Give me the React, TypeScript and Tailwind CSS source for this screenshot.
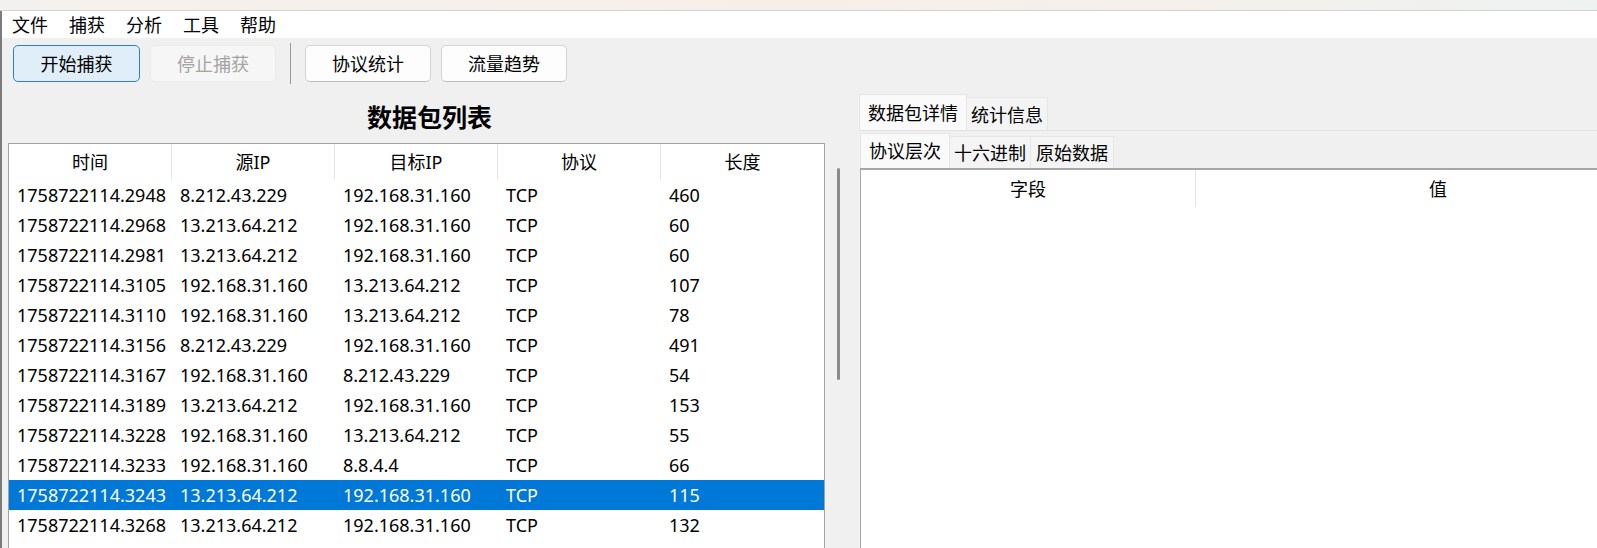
import React from "react";

const rows: string[][] = [
  ["1758722114.2948", "8.212.43.229", "192.168.31.160", "TCP", "460"],
  ["1758722114.2968", "13.213.64.212", "192.168.31.160", "TCP", "60"],
  ["1758722114.2981", "13.213.64.212", "192.168.31.160", "TCP", "60"],
  ["1758722114.3105", "192.168.31.160", "13.213.64.212", "TCP", "107"],
  ["1758722114.3110", "192.168.31.160", "13.213.64.212", "TCP", "78"],
  ["1758722114.3156", "8.212.43.229", "192.168.31.160", "TCP", "491"],
  ["1758722114.3167", "192.168.31.160", "8.212.43.229", "TCP", "54"],
  ["1758722114.3189", "13.213.64.212", "192.168.31.160", "TCP", "153"],
  ["1758722114.3228", "192.168.31.160", "13.213.64.212", "TCP", "55"],
  ["1758722114.3233", "192.168.31.160", "8.8.4.4", "TCP", "66"],
  ["1758722114.3243", "13.213.64.212", "192.168.31.160", "TCP", "115"],
  ["1758722114.3268", "13.213.64.212", "192.168.31.160", "TCP", "132"],
];

const headers = ["时间", "源IP", "目标IP", "协议", "长度"];
const menus = ["文件", "捕获", "分析", "工具", "帮助"];

const App: React.FC = () => {
  const selected = 10;

  return (
    <div
      className="w-[1597px] h-[548px] overflow-hidden bg-[#f0f0f0] flex flex-col text-black text-[18px] leading-none"
      style={{ fontFamily: '"Noto Sans", "Noto Sans CJK SC", sans-serif' }}
    >
      {/* strip of the window behind */}
      <div className="h-[11px] shrink-0 bg-gradient-to-r from-[#f3f1ef] via-[#f8eee8] to-[#eef2f1] border-b border-[#d2d2d2]" />

      <div className="flex-1 min-h-0 flex flex-col border-l-2 border-[#7c7c7c]">
        {/* Menu bar */}
        <div className="h-[27px] shrink-0 bg-white flex items-center -ml-[0.5px]">
          {menus.map((m) => (
            <span key={m} className="px-[10.5px] pt-[1px]">
              {m}
            </span>
          ))}
        </div>

        {/* Toolbar */}
        <div className="h-[50px] shrink-0 flex items-start pt-[7px] pl-[11px]">
          <button className="w-[127px] h-[37px] rounded-[5px] border border-[#2b7fd0] bg-[#e0eef9]">
            开始捕获
          </button>
          <button className="ml-[10px] w-[126px] h-[37px] rounded-[5px] border border-[#ebebeb] bg-[#f6f6f6] text-[#a3a3a3]">
            停止捕获
          </button>
          <div className="ml-[14px] mt-[-2px] w-px h-[41px] bg-[#9a9a9a]" />
          <button className="ml-[14px] w-[126px] h-[37px] rounded-[5px] border border-[#d3d3d3] border-b-[#bdbdbd] bg-[#fdfdfd]">
            协议统计
          </button>
          <button className="ml-[10px] w-[126px] h-[37px] rounded-[5px] border border-[#d3d3d3] border-b-[#bdbdbd] bg-[#fdfdfd]">
            流量趋势
          </button>
        </div>

        {/* Main area */}
        <div className="flex-1 min-h-0 flex">
          {/* Left: packet list */}
          <div className="w-[855px] shrink-0 flex flex-col">
            <div className="h-[55px] shrink-0 flex items-center justify-center pt-[4px] text-[25px] font-bold">
              数据包列表
            </div>
            <div className="flex-1 min-h-0 flex">
              <div className="ml-[6px] w-[817px] bg-white border-t border-l border-r border-[#a2a2a2] overflow-hidden">
                <div className="grid grid-cols-5 h-[36px]">
                  {headers.map((h, i) => (
                    <div
                      key={h}
                      className={
                        "flex items-center justify-center " +
                        (i < 4 ? "border-r border-[#e4e4e4]" : "")
                      }
                    >
                      {h}
                    </div>
                  ))}
                </div>
                {rows.map((r, ri) => (
                  <div
                    key={ri}
                    className={
                      "grid grid-cols-5 h-[30px] " +
                      (ri === selected ? "bg-[#0078d7] text-white" : "")
                    }
                  >
                    {r.map((c, ci) => (
                      <div key={ci} className="flex items-center pl-[8px] whitespace-nowrap">
                        {c}
                      </div>
                    ))}
                  </div>
                ))}
              </div>
              <div className="ml-[12px] mt-[25px] w-[3px] h-[212px] rounded-full bg-[#8a8a8a]" />
            </div>
          </div>

          {/* Right: details */}
          <div className="flex-1 min-w-0 flex flex-col pt-[7px] ml-[2px]">
            <div className="flex items-end h-[36px] shrink-0 border-b border-[#e2e2e2]">
              <div className="h-[36px] px-[8px] flex items-center bg-[#fafafa] border border-b-0 border-[#e6e6e6]">
                数据包详情
              </div>
              <div className="h-[33px] px-[4px] flex items-center bg-[#f4f4f4] border border-b-0 border-l-0 border-[#e6e6e6] pt-[1px]">
                统计信息
              </div>
            </div>
            <div className="flex-1 min-h-0 flex flex-col pt-[2px] pl-[1px]">
              <div className="flex items-end h-[35px] shrink-0">
                <div className="h-[35px] px-[8px] flex items-center bg-[#fafafa] border border-b-0 border-[#e6e6e6]">
                  协议层次
                </div>
                <div className="h-[32px] px-[4px] flex items-center bg-[#f4f4f4] border border-b-0 border-l-0 border-[#e6e6e6] pt-[1px]">
                  十六进制
                </div>
                <div className="h-[32px] px-[5px] flex items-center bg-[#f4f4f4] border border-b-0 border-l-0 border-[#e6e6e6] pt-[1px]">
                  原始数据
                </div>
              </div>
              <div className="flex-1 min-h-0 w-[900px] bg-white border-t-2 border-l border-[#a6a6a6]">
                <div className="flex h-[37px]">
                  <div className="w-[335px] flex items-center justify-center border-r border-[#e4e4e4]">
                    字段
                  </div>
                  <div className="w-[484px] flex items-center justify-center">值</div>
                </div>
              </div>
            </div>
          </div>
        </div>
      </div>
    </div>
  );
};

export default App;
